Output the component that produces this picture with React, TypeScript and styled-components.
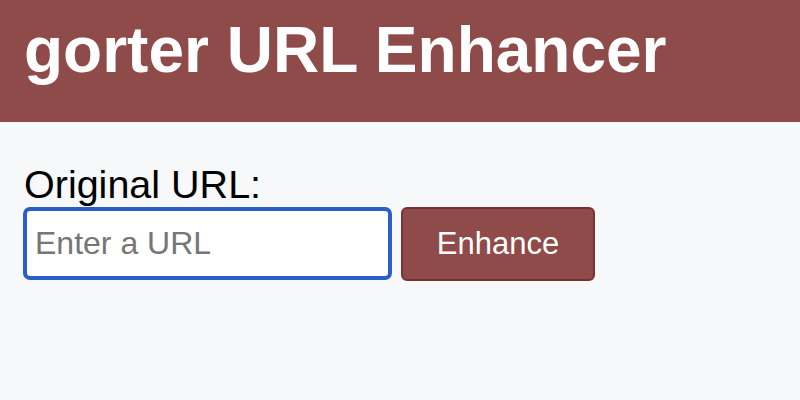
import React from "react";
import styled, { createGlobalStyle } from "styled-components";

const GlobalStyle = createGlobalStyle`
  html, body { margin: 0; padding: 0; }
  body {
    background: #f7f8fa;
    font-family: "Liberation Sans", Arial, Helvetica, sans-serif;
    color: #000;
  }
`;

const Header = styled.header`
  background: #8f4a4a;
  height: 122px;
  box-sizing: border-box;
  padding: 13px 24px 0;
`;

const Title = styled.h1`
  margin: 0;
  color: #fff;
  font-size: 64px;
  font-weight: 700;
  line-height: 74px;
`;

const Main = styled.main`
  padding: 39px 24px 0 23px;
  display: flex;
  flex-direction: column;
`;

const Label = styled.label`
  font-size: 39.5px;
  line-height: 46px;
  display: block;
  padding-left: 1px;
`;

const Row = styled.div`
  display: flex;
  gap: 9px;
`;

const Input = styled.input`
  box-sizing: border-box;
  width: 369px;
  height: 73px;
  border: 4px solid #2b5fc7;
  border-radius: 7px;
  background: #fff;
  padding: 0 8px;
  font-family: "Liberation Sans", Arial, sans-serif;
  font-size: 32px;
  color: #000;
  outline: none;
  &::placeholder { color: #767676; }
`;

const Button = styled.button`
  box-sizing: border-box;
  width: 194px;
  height: 74px;
  background: #8f4a4a;
  border: 2px solid #7a3232;
  border-radius: 6px;
  color: #fff;
  font-family: "Liberation Sans", Arial, sans-serif;
  font-size: 31px;
  cursor: pointer;
`;

export default function App() {
  return (
    <>
      <GlobalStyle />
      <Header>
        <Title>gorter URL Enhancer</Title>
      </Header>
      <Main>
        <Label htmlFor="url">Original URL:</Label>
        <Row>
          <Input id="url" type="text" placeholder="Enter a URL" />
          <Button>Enhance</Button>
        </Row>
      </Main>
    </>
  );
}
